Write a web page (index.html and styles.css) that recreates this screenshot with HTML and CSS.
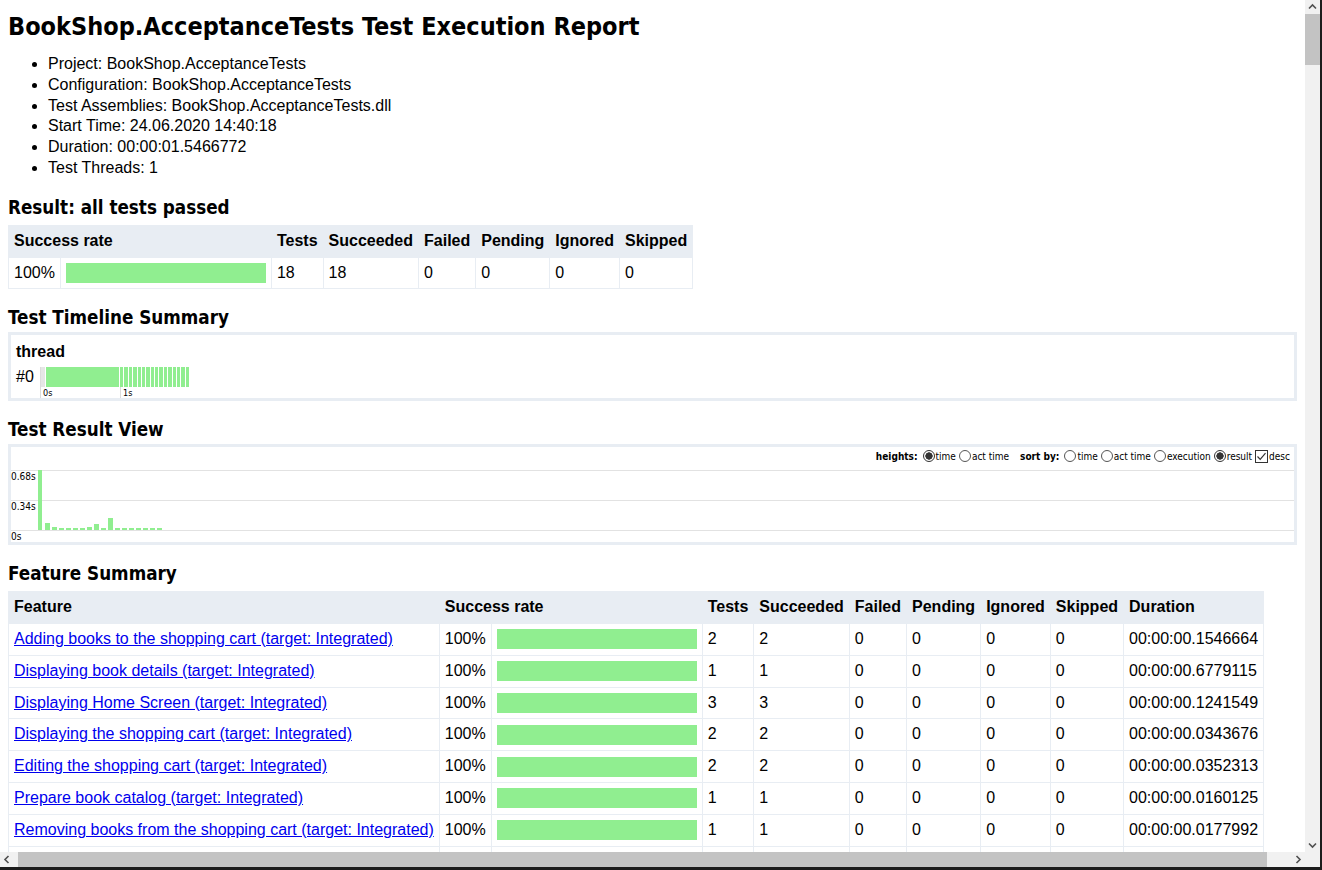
FILE: index.html
```html
<!DOCTYPE html>
<html lang="en">
<head>
<meta charset="utf-8">
<title>BookShop.AcceptanceTests Test Execution Report</title>
<link rel="stylesheet" href="styles.css">
</head>
<body>
<div class="window">
  <div class="viewport">
    <div class="page">
      <h1>BookShop.AcceptanceTests Test Execution Report</h1>
      <ul class="meta">
        <li>Project: BookShop.AcceptanceTests</li>
        <li>Configuration: BookShop.AcceptanceTests</li>
        <li>Test Assemblies: BookShop.AcceptanceTests.dll</li>
        <li>Start Time: 24.06.2020 14:40:18</li>
        <li>Duration: 00:00:01.5466772</li>
        <li>Test Threads: 1</li>
      </ul>

      <h2>Result: all tests passed</h2>
      <table class="grid">
        <tr><th colspan="2">Success rate</th><th>Tests</th><th>Succeeded</th><th>Failed</th><th>Pending</th><th>Ignored</th><th>Skipped</th></tr>
        <tr><td>100%</td><td><div class="bar"></div></td><td>18</td><td>18</td><td>0</td><td>0</td><td>0</td><td>0</td></tr>
      </table>

      <h2>Test Timeline Summary</h2>
      <div class="box timeline">
        <div class="thread-title">thread</div>
        <div class="thread-row">
          <span class="thread-id">#0</span>
          <div class="track">
            <span class="track-start"></span>
            <span class="seg seg-first"></span>
            <span class="segs">
              <span class="seg"></span><span class="seg"></span><span class="seg"></span><span class="seg"></span>
              <span class="seg"></span><span class="seg"></span><span class="seg"></span><span class="seg"></span>
              <span class="seg"></span><span class="seg"></span><span class="seg"></span><span class="seg"></span>
              <span class="seg"></span><span class="seg"></span><span class="seg"></span><span class="seg"></span>
            </span>
          </div>
        </div>
        <div class="axis">
          <span class="tick tick-0">0s</span>
          <span class="tick">1s</span>
        </div>
      </div>

      <h2>Test Result View</h2>
      <div class="box resultview">
        <div class="controls">
          <span class="ctl-label">heights:</span>
          <span class="opt"><span class="radio on"></span>time</span>
          <span class="opt"><span class="radio"></span>act time</span>
          <span class="ctl-label sep">sort by:</span>
          <span class="opt"><span class="radio"></span>time</span>
          <span class="opt"><span class="radio"></span>act time</span>
          <span class="opt"><span class="radio"></span>execution</span>
          <span class="opt"><span class="radio on"></span>result</span>
          <span class="opt"><span class="check"><svg width="13" height="13" viewBox="0 0 13 13"><path d="M2.5 6.5 L5.2 9.3 L10.5 3.2" fill="none" stroke="#333" stroke-width="1.2"/></svg></span>desc</span>
        </div>
        <div class="chart">
          <div class="ylabels">
            <span class="ylabel">0.68s</span>
            <span class="ylabel">0.34s</span>
            <span class="ylabel ylabel-last">0s</span>
          </div>
          <div class="bars">
            <span class="vbar first" style="height:60px"></span>
            <span class="vbar" style="height:7px"></span>
            <span class="vbar" style="height:3px"></span>
            <span class="vbar" style="height:2px"></span>
            <span class="vbar" style="height:2px"></span>
            <span class="vbar" style="height:2px"></span>
            <span class="vbar" style="height:2px"></span>
            <span class="vbar" style="height:3px"></span>
            <span class="vbar" style="height:6px"></span>
            <span class="vbar" style="height:2px"></span>
            <span class="vbar" style="height:12px"></span>
            <span class="vbar" style="height:2px"></span>
            <span class="vbar" style="height:2px"></span>
            <span class="vbar" style="height:2px"></span>
            <span class="vbar" style="height:2px"></span>
            <span class="vbar" style="height:2px"></span>
            <span class="vbar" style="height:2px"></span>
            <span class="vbar" style="height:2px"></span>
          </div>
        </div>
      </div>

      <h2>Feature Summary</h2>
      <table class="grid">
        <tr><th>Feature</th><th colspan="2">Success rate</th><th>Tests</th><th>Succeeded</th><th>Failed</th><th>Pending</th><th>Ignored</th><th>Skipped</th><th>Duration</th></tr>
        <tr><td><a href="#f1">Adding books to the shopping cart (target: Integrated)</a></td><td>100%</td><td><div class="bar"></div></td><td>2</td><td>2</td><td>0</td><td>0</td><td>0</td><td>0</td><td>00:00:00.1546664</td></tr>
        <tr><td><a href="#f2">Displaying book details (target: Integrated)</a></td><td>100%</td><td><div class="bar"></div></td><td>1</td><td>1</td><td>0</td><td>0</td><td>0</td><td>0</td><td>00:00:00.6779115</td></tr>
        <tr><td><a href="#f3">Displaying Home Screen (target: Integrated)</a></td><td>100%</td><td><div class="bar"></div></td><td>3</td><td>3</td><td>0</td><td>0</td><td>0</td><td>0</td><td>00:00:00.1241549</td></tr>
        <tr><td><a href="#f4">Displaying the shopping cart (target: Integrated)</a></td><td>100%</td><td><div class="bar"></div></td><td>2</td><td>2</td><td>0</td><td>0</td><td>0</td><td>0</td><td>00:00:00.0343676</td></tr>
        <tr><td><a href="#f5">Editing the shopping cart (target: Integrated)</a></td><td>100%</td><td><div class="bar"></div></td><td>2</td><td>2</td><td>0</td><td>0</td><td>0</td><td>0</td><td>00:00:00.0352313</td></tr>
        <tr><td><a href="#f6">Prepare book catalog (target: Integrated)</a></td><td>100%</td><td><div class="bar"></div></td><td>1</td><td>1</td><td>0</td><td>0</td><td>0</td><td>0</td><td>00:00:00.0160125</td></tr>
        <tr><td><a href="#f7">Removing books from the shopping cart (target: Integrated)</a></td><td>100%</td><td><div class="bar"></div></td><td>1</td><td>1</td><td>0</td><td>0</td><td>0</td><td>0</td><td>00:00:00.0177992</td></tr>
        <tr><td><a href="#f8">Searching for books (target: Integrated)</a></td><td>100%</td><td><div class="bar"></div></td><td>6</td><td>6</td><td>0</td><td>0</td><td>0</td><td>0</td><td>00:00:00.0701218</td></tr>
      </table>
    </div>
  </div>

  <div class="vscroll">
    <span class="sb-btn"><svg width="15" height="14" viewBox="0 0 15 14"><path d="M4 8.5 L7.5 5 L11 8.5" fill="none" stroke="#505050" stroke-width="1.6"/></svg></span>
    <span class="vthumb"></span>
    <span class="sb-fill"></span>
    <span class="sb-btn"><svg width="15" height="14" viewBox="0 0 15 14"><path d="M4 5.5 L7.5 9 L11 5.5" fill="none" stroke="#505050" stroke-width="1.6"/></svg></span>
  </div>

  <div class="hscroll">
    <span class="sb-btn-h"><svg width="15" height="15" viewBox="0 0 15 15"><path d="M8.5 4 L5 7.5 L8.5 11" fill="none" stroke="#505050" stroke-width="1.6"/></svg></span>
    <span class="hthumb"></span>
    <span class="sb-fill"></span>
    <span class="sb-btn-h"><svg width="15" height="15" viewBox="0 0 15 15"><path d="M6.5 4 L10 7.5 L6.5 11" fill="none" stroke="#505050" stroke-width="1.6"/></svg></span>
  </div>

  <div class="corner"></div>
</div>
</body>
</html>
```

FILE: styles.css
```css
html, body {
  margin: 0;
  height: 870px;
  overflow: hidden;
}

body {
  background: #1c1c1c;
  font-family: "Liberation Sans", Arial, sans-serif;
  font-size: 16px;
  line-height: 1.3;
  color: #000;
}

.window {
  display: grid;
  grid-template-columns: 1305px 15px;
  grid-template-rows: 852px 15px;
  width: 1320px;
  height: 867px;
}

.viewport {
  overflow: hidden;
  background: #fff;
}

.page {
  padding: 9px 8px 8px;
}

h1, h2 {
  font-family: "DejaVu Sans Condensed", "DejaVu Sans", sans-serif;
  font-stretch: condensed;
  font-weight: bold;
}

h1 {
  font-size: 25px;
  line-height: 36px;
  margin: 0 0 9px;
}

h2 {
  font-size: 18.7px;
  line-height: 24px;
  margin: 17px 0 2px;
}

.meta {
  margin: 0 0 16px;
  padding-left: 40px;
}

/* tables */
.grid {
  border-collapse: collapse;
  border: 1px solid #e6ebf1;
}

h2 + .grid {
  margin-top: 5px;
}

.grid th {
  background: #e8edf3;
  text-align: left;
  font-weight: bold;
  padding: 5px;
  white-space: nowrap;
  border: 1px solid #e8edf3;
}

.grid td {
  padding: 5px;
  border: 1px solid #e8edf3;
  white-space: nowrap;
  vertical-align: middle;
}

.grid a {
  color: #0000ee;
}

.bar {
  width: 200px;
  height: 20px;
  background: #90ee90;
}

/* boxes */
.box {
  border: 3px solid #e8edf3;
}

.timeline {
  padding: 7px 5px 0;
}

.thread-title {
  font-weight: bold;
  margin-bottom: 4px;
}

.thread-row {
  display: flex;
  align-items: center;
  height: 20px;
}

.thread-id {
  width: 24px;
}

.track {
  display: flex;
  height: 20px;
  border-left: 1px solid #dcdcdc;
}

.track-start {
  width: 4px;
  background: #e6e6e6;
  margin-right: 1px;
}

.seg {
  background: #90ee90;
}

.seg-first {
  width: 73px;
}

.segs {
  display: flex;
  width: 70px;
}

.segs .seg {
  flex: 1;
  margin-left: 1px;
}

.axis {
  display: flex;
  margin-left: 24px;
  height: 11px;
  font-family: "DejaVu Sans Condensed", "DejaVu Sans", sans-serif;
  font-stretch: condensed;
  font-size: 9px;
  line-height: 12px;
  color: #000;
}

.tick {
  border-left: 1px solid #dcdcdc;
  padding-left: 2px;
}

.tick-0 {
  width: 77px;
}

/* result view */
.controls {
  display: flex;
  justify-content: flex-end;
  align-items: center;
  height: 18px;
  padding: 0 4px 0 0;
  font-family: "DejaVu Sans Condensed", "DejaVu Sans", sans-serif;
  font-stretch: condensed;
  font-size: 10px;
  color: #000;
}

.ctl-label {
  font-weight: bold;
  margin-right: 2px;
}

.ctl-label.sep {
  margin-left: 11px;
}

.opt {
  display: flex;
  align-items: center;
  margin-left: 3px;
}

.radio {
  box-sizing: border-box;
  width: 12px;
  height: 12px;
  border: 1px solid #555;
  border-radius: 50%;
  background: #fff;
  margin-right: 1px;
}

.radio.on {
  border-color: #333;
  background: radial-gradient(circle, #333 0 3.4px, #fff 3.9px);
}

.check {
  box-sizing: border-box;
  display: flex;
  width: 13px;
  height: 13px;
  border: 1px solid #333;
  margin-right: 1px;
  overflow: hidden;
}

.check svg {
  margin: -1px;
}

.chart {
  display: flex;
  height: 72px;
  margin-top: 5px;
  background-image: linear-gradient(#e2e2e2 1px, transparent 1px);
  background-size: 100% 30px;
}

.ylabels {
  display: flex;
  flex-direction: column;
  width: 27px;
  font-family: "DejaVu Sans Condensed", "DejaVu Sans", sans-serif;
  font-stretch: condensed;
  font-size: 10px;
}

.ylabel {
  box-sizing: border-box;
  height: 30px;
  padding-top: 1px;
  line-height: 12px;
}

.ylabel-last {
  height: 12px;
}

.bars {
  display: flex;
  align-items: flex-end;
  gap: 2px;
  height: 60px;
}

.vbar {
  width: 5px;
  background: #90ee90;
}

.vbar.first {
  width: 4px;
  margin-right: 1px;
}

/* scrollbars */
.vscroll {
  display: flex;
  flex-direction: column;
  background: #f1f1f1;
}

.sb-btn {
  display: flex;
  height: 14px;
}

.vthumb {
  height: 51px;
  background: #c3c3c3;
}

.sb-fill {
  flex: 1;
}

.hscroll {
  display: flex;
  background: #f1f1f1;
}

.sb-btn-h {
  display: flex;
  width: 15px;
}

.hthumb {
  width: 1249px;
  margin-left: 3px;
  background: #c3c3c3;
}

.corner {
  background: #f1f1f1;
}
```
